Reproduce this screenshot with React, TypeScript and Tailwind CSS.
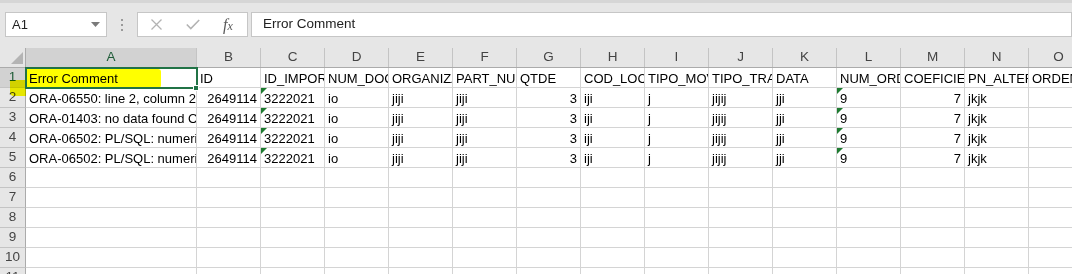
import React from "react";

type Cell = { t: string; align?: "r"; tri?: boolean };

const colLetters = ["A", "B", "C", "D", "E", "F", "G", "H", "I", "J", "K", "L", "M", "N", "O"];
const colW = ["w-[171px]", "w-[64px]", "w-[64px]", "w-[64px]", "w-[64px]", "w-[64px]", "w-[64px]", "w-[64px]", "w-[64px]", "w-[64px]", "w-[64px]", "w-[64px]", "w-[64px]", "w-[64px]", "w-[60px]"];

const header: Cell[] = [
  { t: "Error Comment" },
  { t: "ID" },
  { t: "ID_IMPORTACAO" },
  { t: "NUM_DOCUMENTO" },
  { t: "ORGANIZACAO" },
  { t: "PART_NUMBER" },
  { t: "QTDE" },
  { t: "COD_LOCAL" },
  { t: "TIPO_MOVIMENTO" },
  { t: "TIPO_TRANSACAO" },
  { t: "DATA" },
  { t: "NUM_ORDEM" },
  { t: "COEFICIENTE" },
  { t: "PN_ALTERNATIVO" },
  { t: "ORDEM" },
];

const mk = (a: string): Cell[] => [
  { t: a },
  { t: "2649114", align: "r" },
  { t: "3222021", tri: true },
  { t: "io" },
  { t: "jiji" },
  { t: "jiji" },
  { t: "3", align: "r" },
  { t: "iji" },
  { t: "j" },
  { t: "jijij" },
  { t: "jji" },
  { t: "9", tri: true },
  { t: "7", align: "r" },
  { t: "jkjk" },
  { t: "" },
];

const rows: Cell[][] = [
  header,
  mk("ORA-06550: line 2, column 2: PL/SQL"),
  mk("ORA-01403: no data found ORA-06512"),
  mk("ORA-06502: PL/SQL: numeric or value error"),
  mk("ORA-06502: PL/SQL: numeric or value error"),
  ...Array.from({ length: 6 }, () => colLetters.map(() => ({ t: "" }))),
];

export default function App() {
  return (
    <div className="relative w-[1072px] h-[274px] overflow-hidden bg-white font-['Liberation_Sans',Arial,sans-serif] text-[13px] text-black">
      {/* formula bar */}
      <div className="h-[48px] bg-[#e6e6e6] border-t-[3px] border-[#d6d6d6] flex items-start pt-[9px] pl-[5px]">
        <div className="w-[102px] h-[25px] bg-white border border-[#c6c6c6] flex items-center justify-between pl-[6px] pr-[6px]">
          <span className="text-[#222] text-[13px]">A1</span>
          <svg width="9" height="5" viewBox="0 0 9 5"><path d="M0 0h9L4.5 5z" fill="#7a7a7a" /></svg>
        </div>
        <div className="w-[30px] h-[25px] flex flex-col items-center justify-center gap-[3px]">
          <span className="w-[2px] h-[2px] bg-[#9a9a9a]" />
          <span className="w-[2px] h-[2px] bg-[#9a9a9a]" />
          <span className="w-[2px] h-[2px] bg-[#9a9a9a]" />
        </div>
        <div className="w-[111px] h-[25px] bg-white border border-[#c6c6c6] flex items-center">
          <svg className="ml-[13px]" width="11" height="11" viewBox="0 0 11 11"><path d="M0.5 0.5l10 10M10.5 0.5l-10 10" stroke="#b3b3b3" strokeWidth="1.3" /></svg>
          <svg className="ml-[24px]" width="14" height="11" viewBox="0 0 14 11"><path d="M0.8 5.5l4 4L13.2 1" stroke="#b3b3b3" strokeWidth="1.6" fill="none" /></svg>
          <span className="ml-[23px] font-['Liberation_Serif',serif] italic text-[16px] text-[#5a5a5a] leading-none">
            f<span className="text-[12px]">x</span>
          </span>
        </div>
        <div className="ml-[3px] flex-1 h-[25px] bg-white border border-[#c6c6c6] flex items-center pl-[11px]">
          <span className="text-[13.5px] text-[#222]">Error Comment</span>
        </div>
      </div>

      {/* column header row */}
      <div className="flex h-[20px] bg-[#e6e6e6] border-b border-[#ababab] text-[13.5px]">
        <div className="w-[26px] shrink-0 h-full border-r border-[#ababab] relative">
          <svg className="absolute left-[11px] top-[4px]" width="12" height="12" viewBox="0 0 12 12"><path d="M12 0V12H0z" fill="#b4b4b4" /></svg>
        </div>
        {colLetters.map((l, i) => (
          <div
            key={l}
            className={`${colW[i]} shrink-0 h-full border-r border-[#c4c4c4] flex items-center justify-center ${i === 0 ? "bg-[#d2d2d2] text-[#1f5c38]" : "text-[#444]"}`}
          >
            {l}
          </div>
        ))}
      </div>

      {/* body rows */}
      {rows.map((r, ri) => (
        <div key={ri} className="flex h-[20px]">
          <div
            className={`w-[26px] shrink-0 h-full border-r border-b border-r-[#ababab] border-b-[#c4c4c4] flex items-center justify-center text-[13.5px] ${ri === 0 ? "bg-[#d2d2d2] text-[#1f5c38]" : "bg-[#e6e6e6] text-[#444]"}`}
          >
            {ri + 1}
          </div>
          {r.map((c, ci) => (
            <div
              key={ci}
              className={`${colW[ci]} shrink-0 h-full border-r border-b border-[#d4d4d4] relative overflow-hidden whitespace-nowrap px-[3px] leading-[19px] pt-[1px] ${c.align === "r" ? "text-right" : "text-left"}`}
            >
              {c.tri && (
                <svg className="absolute left-0 top-0" width="6" height="6" viewBox="0 0 6 6"><path d="M0 0h6L0 6z" fill="#1e7b30" /></svg>
              )}
              {c.t}
            </div>
          ))}
        </div>
      ))}

      {/* highlighter marks */}
      <div className="absolute left-[25px] top-[69px] w-[136px] h-[19px] bg-[#ffff00] mix-blend-multiply rounded-r-[3px]" />
      <div className="absolute left-[10px] top-[80px] w-[16px] h-[16px] bg-[#ffff00] mix-blend-multiply rounded-bl-[4px]" />

      {/* selection */}
      <div className="absolute left-[25px] top-[67px] w-[173px] h-[22px] border-2 border-[#217346]" />
      <div className="absolute left-[193px] top-[85px] w-[6px] h-[6px] bg-[#217346] border border-white" />
    </div>
  );
}
